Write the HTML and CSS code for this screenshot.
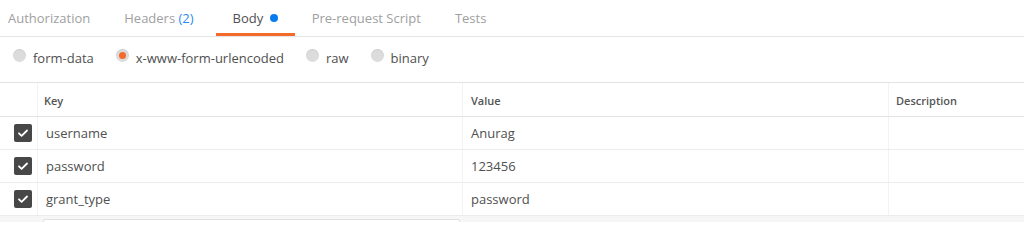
FILE: index.html
```html
<!DOCTYPE html>
<html>
<head>
<meta charset="utf-8">
<link rel="stylesheet" href="styles.css">
</head>
<body>
<div class="tabs">
  <div class="tab first">Authorization</div>
  <div class="tab headers">Headers <span class="count">(2)</span></div>
  <div class="tab active">Body <span class="dot"></span></div>
  <div class="tab">Pre-request Script</div>
  <div class="tab">Tests</div>
</div>
<div class="modes">
  <label class="mode"><span class="radio"></span>form-data</label>
  <label class="mode"><span class="radio on"></span>x-www-form-urlencoded</label>
  <label class="mode"><span class="radio"></span>raw</label>
  <label class="mode"><span class="radio"></span>binary</label>
</div>
<div class="table">
  <div class="row head">
    <div class="cell chk"></div>
    <div class="cell key">Key</div>
    <div class="cell val">Value</div>
    <div class="cell desc">Description</div>
  </div>
  <div class="row">
    <div class="cell chk"><span class="box"><svg viewBox="0 0 18 18" width="18" height="18"><path d="M5 9.3l2.6 2.6L13 6.5" fill="none" stroke="#fff" stroke-width="1.8" stroke-linecap="round" stroke-linejoin="round"/></svg></span></div>
    <div class="cell key">username</div>
    <div class="cell val">Anurag</div>
    <div class="cell desc"></div>
  </div>
  <div class="row">
    <div class="cell chk"><span class="box"><svg viewBox="0 0 18 18" width="18" height="18"><path d="M5 9.3l2.6 2.6L13 6.5" fill="none" stroke="#fff" stroke-width="1.8" stroke-linecap="round" stroke-linejoin="round"/></svg></span></div>
    <div class="cell key">password</div>
    <div class="cell val">123456</div>
    <div class="cell desc"></div>
  </div>
  <div class="row">
    <div class="cell chk"><span class="box"><svg viewBox="0 0 18 18" width="18" height="18"><path d="M5 9.3l2.6 2.6L13 6.5" fill="none" stroke="#fff" stroke-width="1.8" stroke-linecap="round" stroke-linejoin="round"/></svg></span></div>
    <div class="cell key">grant_type</div>
    <div class="cell val">password</div>
    <div class="cell desc"></div>
  </div>
  <div class="row new">
    <div class="cell chk"></div>
    <div class="cell key"><div class="input"></div></div>
    <div class="cell val"></div>
    <div class="cell desc"></div>
  </div>
</div>
</body>
</html>
```

FILE: styles.css
```css
* { box-sizing: border-box; }
html, body { margin: 0; padding: 0; background: #fff; }
body {
  font-family: "Open Sans", "Liberation Sans", sans-serif;
  color: #505050;
  width: 1024px;
  height: 222px;
  overflow: hidden;
}
.tabs {
  display: flex;
  height: 37px;
  border-bottom: 1px solid #e6e6e6;
  padding-left: 8px;
  background: #fff;
}
.tab {
  font-size: 13px;
  color: #a0a0a0;
  padding: 0 17px;
  line-height: 36px;
  height: 36px;
  border-bottom: 3px solid transparent;
  white-space: nowrap;
}
.tab.first { padding-left: 0; }
.tab.headers { padding-right: 22px; }
.tab.active { color: #505050; border-bottom-color: #f26b2a; }
.count { color: #2a8cf0; }
.dot {
  display: inline-block;
  width: 8px;
  height: 8px;
  border-radius: 50%;
  background: #0a7bef;
  margin-left: 3px;
  vertical-align: 1px;
}
.modes {
  display: flex;
  align-items: center;
  height: 45px;
  padding-left: 13px;
  gap: 22px;
}
.mode {
  display: flex;
  align-items: center;
  gap: 7px;
  font-size: 13px;
  color: #505050;
  position: relative;
  top: -2px;
}
.radio {
  width: 13px;
  height: 13px;
  border-radius: 50%;
  background: #dcdcdc;
  box-shadow: inset 0 1px 1px rgba(0,0,0,0.08);
  display: flex;
  align-items: center;
  justify-content: center;
  position: relative;
  top: -2px;
}
.radio.on::after {
  content: "";
  width: 7px;
  height: 7px;
  border-radius: 50%;
  background: #f26b2a;
}
.table { border-top: 1px solid #e3e3e3; }
.row {
  display: grid;
  grid-template-columns: 37px 425px 426px 1fr;
  height: 33px;
  border-bottom: 1px solid #ececec;
}
.row.head { height: 34px; border-bottom-color: #e3e3e3; }
.cell {
  border-left: 1px solid #f3f3f3;
  display: flex;
  align-items: center;
  font-size: 13px;
  color: #505050;
}
.cell.chk { border-left: none; justify-content: flex-start; padding-left: 14px; }
.cell.key { padding-left: 8px; }
.cell.val { padding-left: 8px; }
.cell.desc { padding-left: 7px; }
.row.head .cell { font-size: 11px; font-weight: 600; color: #555; padding-top: 1px; }
.row.head .cell.key { padding-left: 6px; }
.box {
  width: 18px;
  height: 18px;
  border-radius: 2px;
  background: #474747;
  display: flex;
}
.row.new { background: #f6f6f6; border-bottom: none; }
.row.new .cell { border-left-color: #f6f6f6; align-items: flex-start; }
.row.new .cell.key { padding-left: 5px; }
.input {
  margin-top: 3px;
  width: 417px;
  height: 28px;
  background: #fff;
  border: 1px solid #e0e0e0;
  border-radius: 2px;
}
```
